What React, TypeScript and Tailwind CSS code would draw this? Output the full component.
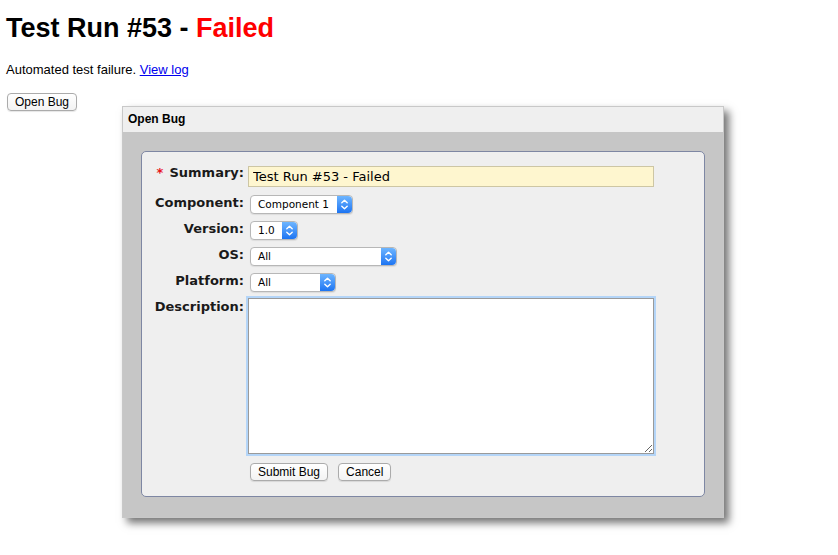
import React from 'react';

const labelFont = { fontFamily: '"DejaVu Sans", Verdana, sans-serif' };

function Stepper() {
  return (
    <span className="flex w-[15px] self-stretch items-center justify-center rounded-r-[4px] bg-gradient-to-b from-[#6db5ff] to-[#1b74f2]">
      <svg width="9" height="13" viewBox="0 0 9 13" fill="none" stroke="white" strokeWidth="1.4" strokeLinecap="round" strokeLinejoin="round">
        <path d="M1.8 4.8 L4.5 2.2 L7.2 4.8" />
        <path d="M1.8 8.2 L4.5 10.8 L7.2 8.2" />
      </svg>
    </span>
  );
}

function FakeSelect({ value, width }: { value: string; width: string }) {
  return (
    <div
      className={`ml-[2px] flex h-[19px] ${width} items-stretch rounded-[4px] border border-[#b7b7b7] bg-white shadow-[0_1px_1px_rgba(0,0,0,0.08)]`}
    >
      <span className="flex flex-1 items-center pl-[7px] text-[10.5px] text-black" style={labelFont}>
        {value}
      </span>
      <Stepper />
    </div>
  );
}

function Field({ label, required, children, labelPad = 'pt-0' }: { label: string; required?: boolean; children: React.ReactNode; labelPad?: string }) {
  return (
    <div className="flex items-start">
      <div className={`w-[102px] shrink-0 text-right text-[13px] leading-[13px] font-bold text-[#1a1a1a] ${labelPad}`} style={labelFont}>
        {required && <span className="mr-[6px] text-[#e8141b]">*</span>}
        {label}
      </div>
      <div className="ml-[4px] flex flex-1 flex-col items-start">{children}</div>
    </div>
  );
}

function MacButton({ children }: { children: React.ReactNode }) {
  return (
    <button className="h-[18px] rounded-[4px] border border-[#ababab] bg-gradient-to-b from-white to-[#f3f3f3] px-[7px] text-[12px] leading-[16px] text-black shadow-[0_1px_1px_rgba(0,0,0,0.1)]">
      {children}
    </button>
  );
}

export default function App() {
  return (
    <div className="relative min-h-screen bg-white text-black" style={{ fontFamily: '"Liberation Sans", Arial, sans-serif' }}>
      <div className="pl-[6px] pt-[13px]">
        <h1 className="text-[27px] leading-[30px] font-bold">
          Test Run #53 - <span className="text-[#ff0000]">Failed</span>
        </h1>
        <p className="mt-[19px] text-[13px] leading-[16px]">
          Automated test failure.{' '}
          <a href="#" className="text-[#0000ee] underline">
            View log
          </a>
        </p>
        <div className="mt-[15px] ml-px flex">
          <MacButton>Open Bug</MacButton>
        </div>
      </div>

      {/* Dialog */}
      <div className="absolute left-[122px] top-[106px] w-[602px] border border-[#c8c8c8] bg-[#c6c6c6] shadow-[5px_5px_8px_rgba(0,0,0,0.55)]">
        <div className="h-[25px] bg-[#efefef] pl-[5px] text-[12px] leading-[25px] font-bold">Open Bug</div>

        <div className="px-[18px] pt-[19px] pb-[20px]">
          <div className="rounded-[5px] border border-[#7e87a3] bg-[#efefef] pt-[14px] pb-[15px]">
            <div className="flex flex-col">
              <Field label="Summary:" required>
                <input
                  readOnly
                  value="Test Run #53 - Failed"
                  className="block h-[21px] w-[406px] border border-[#cdc6a4] bg-[#fef6cf] px-[4px] text-[13px] text-black outline-none"
                  style={labelFont}
                />
              </Field>
              <div className="mt-[8px]">
                <Field label="Component:" labelPad="pt-px">
                  <FakeSelect value="Component 1" width="w-[103px]" />
                </Field>
              </div>
              <div className="mt-[7px]">
                <Field label="Version:" labelPad="pt-px">
                  <FakeSelect value="1.0" width="w-[48px]" />
                </Field>
              </div>
              <div className="mt-[7px]">
                <Field label="OS:" labelPad="pt-px">
                  <FakeSelect value="All" width="w-[147px]" />
                </Field>
              </div>
              <div className="mt-[7px]">
                <Field label="Platform:" labelPad="pt-px">
                  <FakeSelect value="All" width="w-[86px]" />
                </Field>
              </div>
              <div className="mt-[4px]">
                <Field label="Description:" labelPad="pt-[4px]">
                  <textarea className="mt-[2px] block h-[156px] w-[406px] resize border border-[#9a9a9a] bg-white outline-none shadow-[0_0_0_2px_#b4d5f8]" />
                </Field>
              </div>
              <div className="mt-[9px] ml-[108px] flex gap-[10px]">
                <MacButton>Submit Bug</MacButton>
                <MacButton>Cancel</MacButton>
              </div>
            </div>
          </div>
        </div>
      </div>
    </div>
  );
}
